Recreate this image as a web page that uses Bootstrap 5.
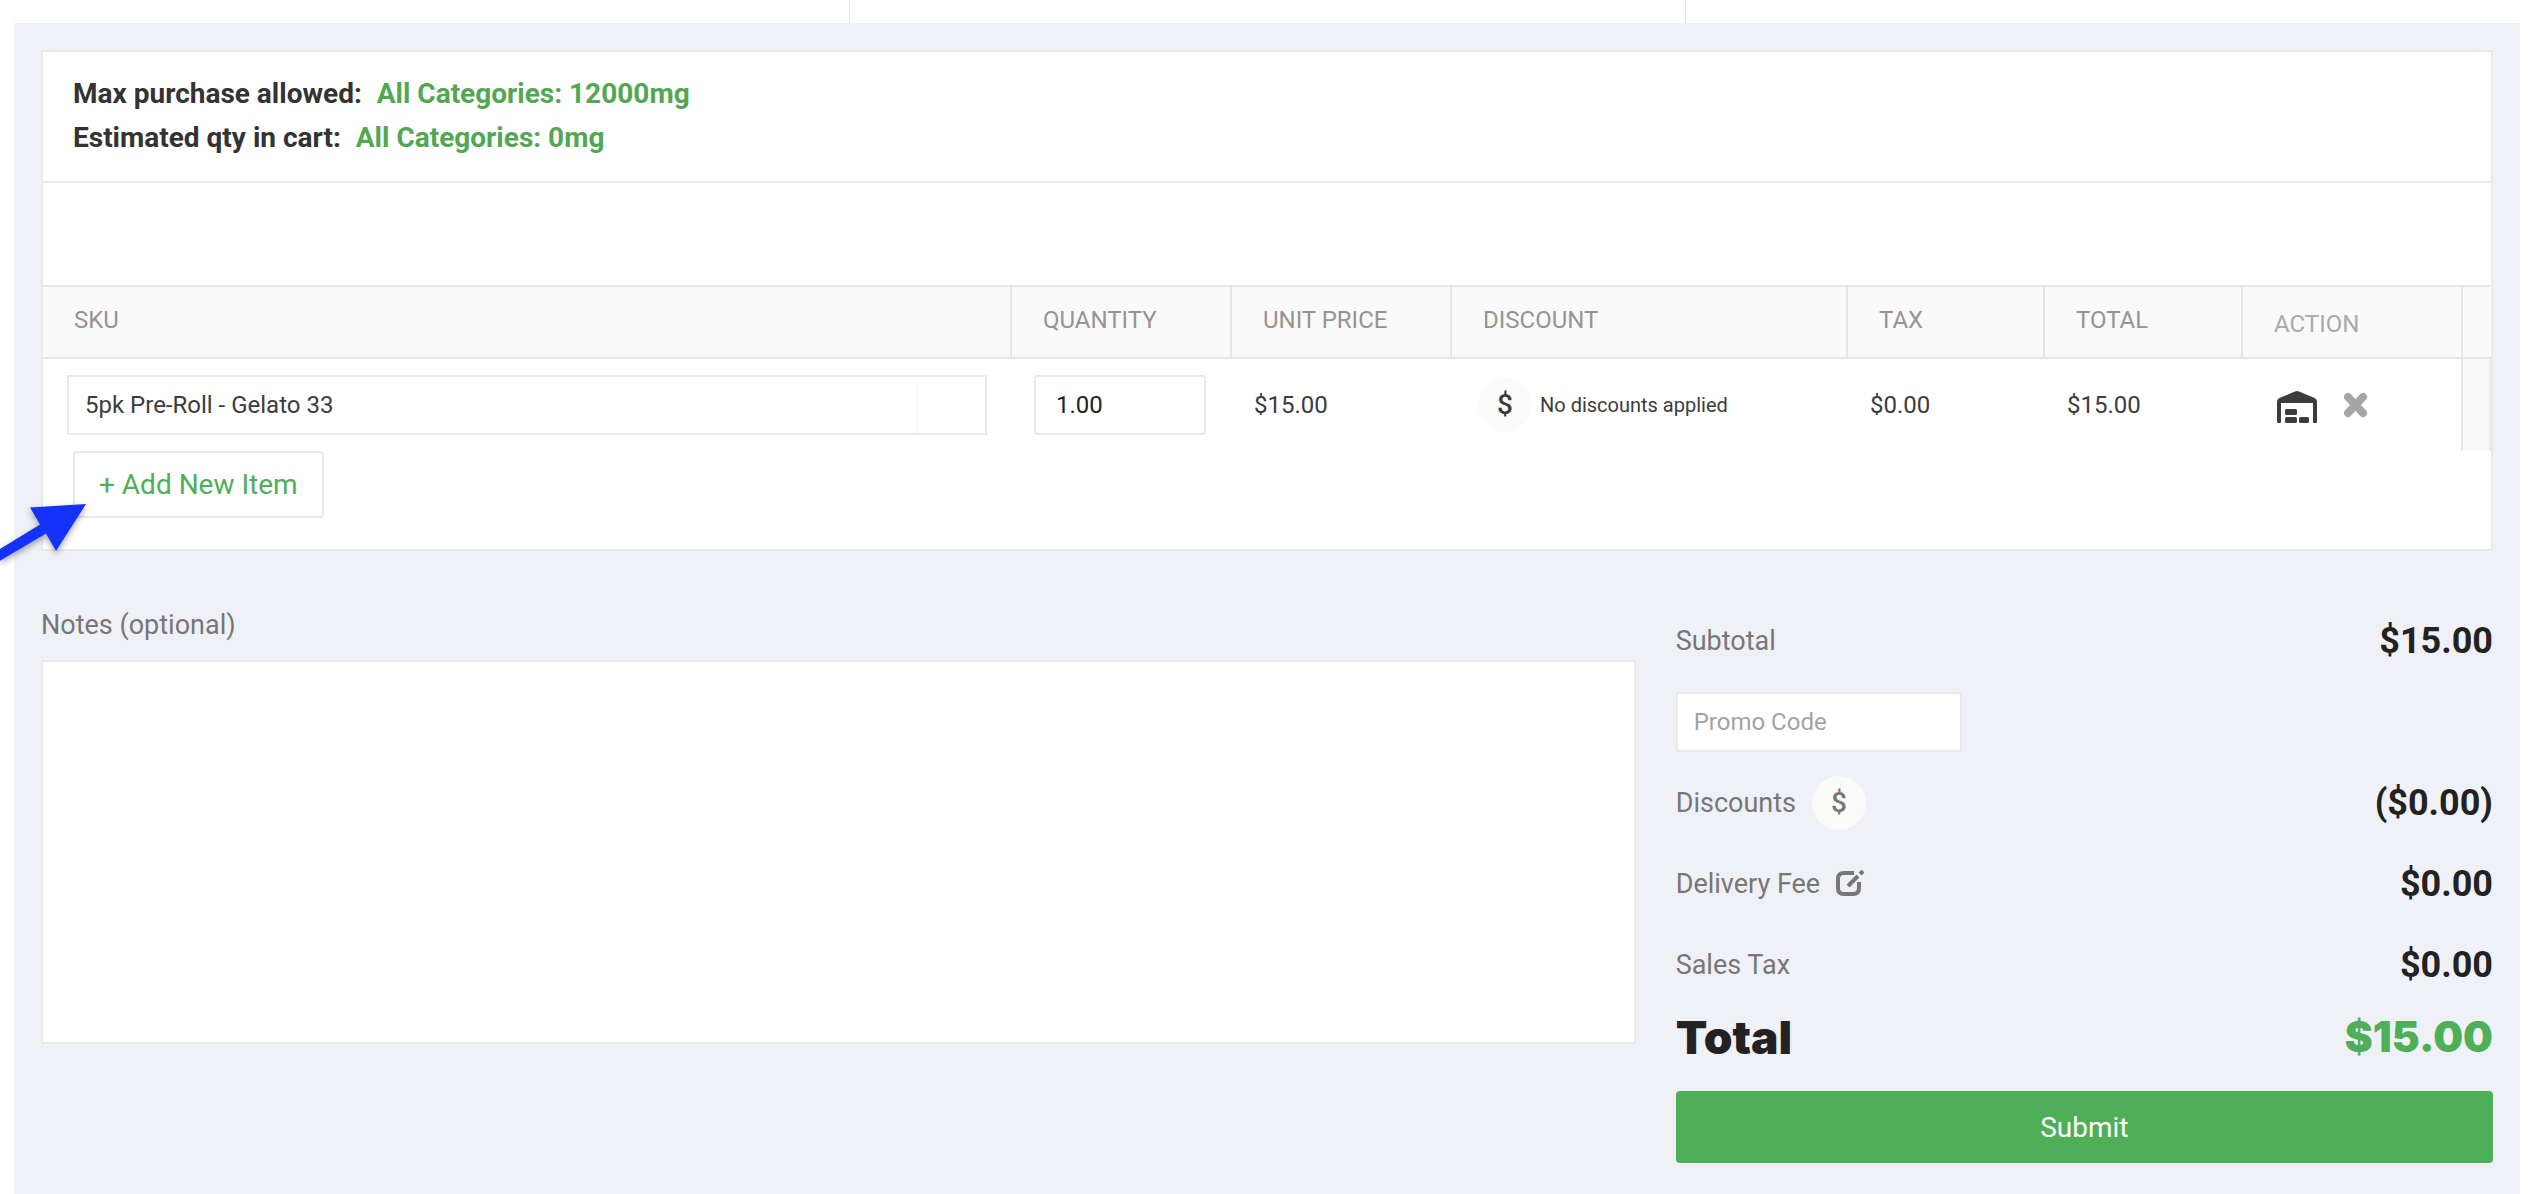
<!DOCTYPE html>
<html lang="en">
<head>
<meta charset="utf-8">
<meta name="viewport" content="width=device-width, initial-scale=1">
<title>Order cart</title>
<link rel="stylesheet" href="https://cdn.jsdelivr.net/npm/bootstrap@5.3.0/dist/css/bootstrap.min.css">
<style>
  body { font-family: Roboto, "Liberation Sans", sans-serif; font-size: 24px; line-height: 32px; color: #3c3c3c; background: #fff; }
  .top-strip { height: 23px; display: grid; grid-template-columns: 850px 836px 1fr; }
  .top-strip > div:not(:last-child) { border-right: 1px solid #e6e6e6; }
  .order-panel { margin: 0 8px 0 14px; padding: 27px 27px 32px; background: #f0f1f7; }
  .cart-box { background: #fff; border: 2px solid #e9e9e9; padding-bottom: 31px; }
  .limits { padding: 20px 30px 21px; font-size: 28px; line-height: 44px; font-weight: 700; color: #333; border-bottom: 2px solid #e9e9e9; }
  .limits span { color: #52a752; margin-left: 8px; }
  .cart-gap { height: 102px; }
  .cart-table { table-layout: fixed; width: 100%; border-top: 2px solid #e9e9e9; }
  .cart-table th { height: 72px; padding: 0 0 4px 31px; font-weight: 400; color: #979393; background: #fafafa; border-right: 2px solid #e6e6e6; border-bottom: 2px solid #e6e6e6; }
  .cart-table th.action-head { color: #aaa; padding-top: 3px; padding-bottom: 0; }
  .cart-table th:last-child { border-right: 0; }
  .cart-table td { height: 93px; padding: 0 0 0 23px; }
  .cart-table td.edge { background: #fafafa; border-left: 2px solid #e6e6e6; border-right: 2px solid #ececec; }
  .field { height: 60px; padding: 0 16px; border: 2px solid #e9e9e9; border-radius: 0; font-size: 24px; color: #3c3c3c; }
  .field::placeholder { color: #a3a3a3; }
  .field-sku { background: #fff linear-gradient(#f8f8f8, #f8f8f8) no-repeat right 67px bottom / 2px 48px; }
  .field-qty { width: 172px; padding: 0 20px; border-radius: 4px; color: #222; }
  .field-promo { width: 286px; }
  .round-btn { width: 54px; height: 54px; padding: 0; border: 0; border-radius: 50%; background: #fbfbfb; color: inherit; font-size: 28px; font-weight: 500; }
  .disc-note { font-size: 20px; }
  .icon-btn { display: inline-flex; padding: 0; border: 0; background: none; }
  .add-btn { height: 67px; margin-left: 30px; padding: 0 24px; border: 2px solid #e9e9e9; border-radius: 4px; background: #fff; color: #4fae58; font-size: 28px; }
  .below { padding-top: 49px; }
  .notes-col { padding-right: 40px; font-size: 27px; color: #777; }
  .notes-col label { padding-top: 9px; margin-bottom: 19px; }
  .notes-area { height: 384px; border: 2px solid #e9e9e9; border-radius: 0; resize: none; font-size: 24px; }
  .sum-row { height: 81px; font-size: 27px; color: #777; }
  .sum-row strong { font-size: 36px; font-weight: 700; color: #222; }
  .grand { height: 64px; font-family: Inter, "Liberation Sans", sans-serif; font-size: 46px; font-weight: 900; color: #222; }
  .grand strong { font-size: 42px; font-weight: 900; color: #4fae58; }
  .submit-btn { height: 72px; margin-top: 22px; padding-top: 3px; border: 0; border-radius: 4px; background: #4fae58; color: #fff; font-size: 28px; }
  .pointer { position: absolute; left: 0; top: 496px; pointer-events: none; filter: drop-shadow(0 3px 3px rgba(0,0,0,.35)); }
</style>
<script src="https://cdn.jsdelivr.net/npm/bootstrap@5.3.0/dist/js/bootstrap.bundle.min.js"></script>
</head>
<body class="position-relative">
<div class="top-strip"><div></div><div></div><div></div></div>

<main class="order-panel">
  <section class="cart-box">
    <div class="limits">
      <div>Max purchase allowed: <span>All Categories: 12000mg</span></div>
      <div>Estimated qty in cart: <span>All Categories: 0mg</span></div>
    </div>
    <div class="cart-gap"></div>
    <table class="cart-table">
      <colgroup>
        <col><col style="width:220px"><col style="width:220px"><col style="width:396px"><col style="width:197px"><col style="width:198px"><col style="width:220px"><col style="width:28px">
      </colgroup>
      <thead>
        <tr><th scope="col">SKU</th><th scope="col">QUANTITY</th><th scope="col">UNIT PRICE</th><th scope="col">DISCOUNT</th><th scope="col">TAX</th><th scope="col">TOTAL</th><th scope="col" class="action-head">ACTION</th><th></th></tr>
      </thead>
      <tbody>
        <tr>
          <td class="ps-4 pe-4"><input class="form-control field field-sku" type="text" value="5pk Pre-Roll - Gelato 33" aria-label="SKU"></td>
          <td><input class="form-control field field-qty" type="text" value="1.00" aria-label="Quantity"></td>
          <td>$15.00</td>
          <td><div class="d-flex align-items-center gap-2 ps-1"><button type="button" class="round-btn" aria-label="Add discount">$</button><span class="disc-note">No discounts applied</span></div></td>
          <td>$0.00</td>
          <td>$15.00</td>
          <td>
            <div class="d-flex align-items-center ps-2 ms-1">
              <button type="button" class="icon-btn" aria-label="Warehouse">
                <svg width="40" height="36" viewBox="0 0 40 36"><path fill="#3c3c3c" d="M0 36V15q0-3 3-4.200L18 4.500q2-.8 4 0L37 10.800q3 1.200 3 4.200V35q0 1-1 1h-2q-1 0-1-1V16H4v19q0 1-1 1H1q-1 0-1-1z"/><rect x="8" y="22" width="12" height="6" rx="1.500" fill="#3c3c3c"/><rect x="8" y="30" width="12" height="6" rx="1.500" fill="#3c3c3c"/><rect x="22" y="30" width="10" height="6" rx="1.500" fill="#3c3c3c"/></svg>
              </button>
              <button type="button" class="icon-btn ms-4" aria-label="Remove item">
                <svg width="28" height="26" viewBox="0 0 28 26"><path d="M7 5l15 16M22 5L7 21" stroke="#a6a6a6" stroke-width="8" stroke-linecap="round"/></svg>
              </button>
            </div>
          </td>
          <td class="edge p-0"></td>
        </tr>
      </tbody>
    </table>
    <button type="button" class="add-btn">+ Add New Item</button>
  </section>

  <section class="row g-0 below">
    <div class="col-8 notes-col">
      <label for="notes" class="d-block">Notes (optional)</label>
      <textarea id="notes" class="form-control notes-area"></textarea>
    </div>
    <div class="col-4">
      <div class="sum-row d-flex align-items-center justify-content-between"><span>Subtotal</span><strong>$15.00</strong></div>
      <div class="sum-row d-flex align-items-center"><input class="form-control field field-promo" type="text" placeholder="Promo Code" aria-label="Promo Code"></div>
      <div class="sum-row d-flex align-items-center justify-content-between"><span class="d-flex align-items-center gap-3">Discounts <button type="button" class="round-btn" aria-label="Add order discount">$</button></span><strong>($0.00)</strong></div>
      <div class="sum-row d-flex align-items-center justify-content-between"><span class="d-flex align-items-center gap-3">Delivery Fee
        <button type="button" class="icon-btn" aria-label="Edit delivery fee"><svg width="29" height="28" viewBox="0 0 29 28" fill="none" stroke="#777"><path stroke-width="4" d="M18 3H8Q2 3 2 9v9q0 6 6 6h9q6 0 6-6v-6"/><path stroke-width="4" d="M12 16L22 6"/><path stroke-width="4" d="M24 4l3-3"/></svg></button></span><strong>$0.00</strong></div>
      <div class="sum-row d-flex align-items-center justify-content-between"><span>Sales Tax</span><strong>$0.00</strong></div>
      <div class="grand d-flex align-items-center justify-content-between"><span>Total</span><strong>$15.00</strong></div>
      <button type="submit" class="submit-btn w-100">Submit</button>
    </div>
  </section>
</main>

<svg class="pointer" width="96" height="70" viewBox="0 496 96 70" aria-hidden="true"><path fill="#1433f8" d="M-4 551.500L40 524.500L30 507.500L86 504L56 551L46 533.500L-4 563z"/></svg>
</body>
</html>
